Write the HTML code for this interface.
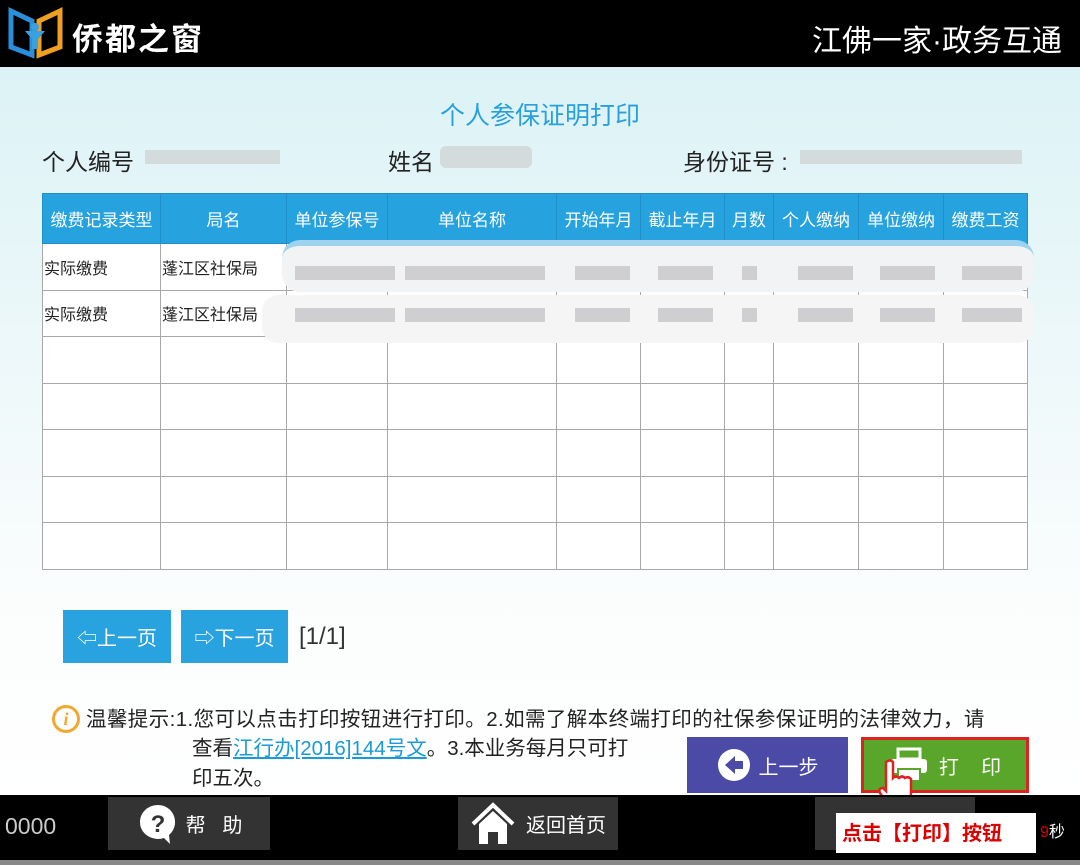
<!DOCTYPE html><html><head><meta charset="utf-8"><style>
*{margin:0;padding:0;box-sizing:border-box}
body{width:1080px;height:865px;position:relative;overflow:hidden;font-family:"Liberation Sans","Noto Sans CJK SC",sans-serif;background:linear-gradient(#d8f1f5 0,#eaf7f9 300px,#fbfdfd 600px,#fff 800px)}
.a{position:absolute}
table{position:absolute;left:42px;top:193px;border-collapse:collapse;background:#fff}
td,th{border:1px solid #a8a8a8;height:46.5px;font-size:16px;font-weight:normal;text-align:left;padding-left:1px;color:#222}
th{background:#26a2df;color:#fff;height:50px;border:1px solid #1e8fc8;text-align:center;padding:0;font-size:17px}
.g{position:absolute;height:14px;background:#cfcfd1}
.btn{position:absolute;color:#fff;font-size:20px;display:flex;align-items:center;justify-content:center}
</style></head><body>
<div class="a" style="left:0;top:0;width:1080px;height:67px;background:#000"></div>
<svg class="a" style="left:8px;top:7px" width="55" height="52"><path d="M3 4 L24 14 L24 48 L3 40 Z" fill="none" stroke="#2a8fd8" stroke-width="5"/><path d="M52 4 L31 14 L31 48 L52 40 Z" fill="none" stroke="#f0a020" stroke-width="5"/><circle cx="27" cy="20" r="4" fill="#3aa0e0"/><path d="M17 24 L37 24 L30 32 L30 42 L24 42 L24 32Z" fill="#3aa0e0"/></svg>
<div class="a" style="left:72px;top:14px;color:#fff;font-size:31px;letter-spacing:2px;font-weight:bold">侨都之窗</div>
<div class="a" style="left:812px;top:16px;color:#fff;font-size:30px">江佛一家·政务互通</div>
<div class="a" style="left:0;top:96px;width:1080px;text-align:center;color:#29a0dc;font-size:25px">个人参保证明打印</div>
<div class="a" style="left:42px;top:143px;font-size:23px;color:#222">个人编号</div>
<div class="g" style="left:145px;top:150px;width:135px;background:#d4dbdd"></div>
<div class="a" style="left:388px;top:143px;font-size:23px;color:#222">姓名</div>
<div class="g" style="left:440px;top:146px;width:92px;height:22px;background:#d4dbdd;border-radius:6px"></div>
<div class="a" style="left:683px;top:143px;font-size:23px;color:#222">身份证号 :</div>
<div class="g" style="left:800px;top:150px;width:222px;background:#d4dbdd"></div>
<table><tr><th style="width:118px">缴费记录类型</th><th style="width:126px">局名</th><th style="width:101px">单位参保号</th><th style="width:169px">单位名称</th><th style="width:84px">开始年月</th><th style="width:84px">截止年月</th><th style="width:49px">月数</th><th style="width:85px">个人缴纳</th><th style="width:85px">单位缴纳</th><th style="width:84px">缴费工资</th></tr>
<tr><td>实际缴费</td><td>蓬江区社保局</td><td></td><td></td><td></td><td></td><td></td><td></td><td></td><td></td></tr>
<tr><td>实际缴费</td><td>蓬江区社保局</td><td></td><td></td><td></td><td></td><td></td><td></td><td></td><td></td></tr>
<tr><td></td><td></td><td></td><td></td><td></td><td></td><td></td><td></td><td></td><td></td></tr>
<tr><td></td><td></td><td></td><td></td><td></td><td></td><td></td><td></td><td></td><td></td></tr>
<tr><td></td><td></td><td></td><td></td><td></td><td></td><td></td><td></td><td></td><td></td></tr>
<tr><td></td><td></td><td></td><td></td><td></td><td></td><td></td><td></td><td></td><td></td></tr>
<tr><td></td><td></td><td></td><td></td><td></td><td></td><td></td><td></td><td></td><td></td></tr></table>
<div class="a" style="left:282px;top:240px;width:752px;height:52px;background:#f2f3f4;border-radius:18px;border-top:6px solid #9fd2ee"></div>
<div class="a" style="left:262px;top:295px;width:772px;height:48px;background:#f5f5f6;border-radius:16px"></div>
<div class="g" style="left:295px;top:266px;width:100px"></div><div class="g" style="left:405px;top:266px;width:140px"></div><div class="g" style="left:575px;top:266px;width:55px"></div><div class="g" style="left:658px;top:266px;width:55px"></div><div class="g" style="left:742px;top:266px;width:15px"></div><div class="g" style="left:798px;top:266px;width:55px"></div><div class="g" style="left:880px;top:266px;width:55px"></div><div class="g" style="left:962px;top:266px;width:60px"></div>
<div class="g" style="left:295px;top:308px;width:100px"></div><div class="g" style="left:405px;top:308px;width:140px"></div><div class="g" style="left:575px;top:308px;width:55px"></div><div class="g" style="left:658px;top:308px;width:55px"></div><div class="g" style="left:742px;top:308px;width:15px"></div><div class="g" style="left:798px;top:308px;width:55px"></div><div class="g" style="left:880px;top:308px;width:55px"></div><div class="g" style="left:962px;top:308px;width:60px"></div>
<div class="btn" style="left:63px;top:610px;width:108px;height:53px;background:#28a3df">⇦上一页</div>
<div class="btn" style="left:181px;top:610px;width:107px;height:53px;background:#28a3df">⇨下一页</div>
<div class="a" style="left:299px;top:623px;font-size:24px;color:#333">[1/1]</div>
<div class="a" style="left:52px;top:705px;width:28px;height:28px;border:3px solid #f0a830;border-radius:50%;color:#f0a830;font-style:italic;font-weight:bold;text-align:center;font-size:18px;line-height:22px;font-family:'Liberation Serif',serif">i</div>
<div class="a" style="left:86px;top:705px;font-size:20.5px;color:#222;line-height:29px;width:960px;white-space:nowrap;letter-spacing:0.4px">温馨提示:1.您可以点击打印按钮进行打印。2.如需了解本终端打印的社保参保证明的法律效力，请</div>
<div class="a" style="left:192px;top:734px;font-size:20.5px;color:#222;line-height:30px;width:500px">查看<span style="color:#1a9ad8;text-decoration:underline">江行办[2016]144号文</span>。3.本业务每月只可打<br>印五次。</div>
<div class="btn" style="left:687px;top:737px;width:161px;height:56px;background:#4b4aa6"><svg width="34" height="34" style="margin-right:8px"><circle cx="17" cy="17" r="16" fill="#fff"/><path d="M8 17 L18 8 L18 13 L26 13 L26 21 L18 21 L18 26Z" fill="#4b4aa6"/></svg>上一步</div>
<div class="btn" style="left:861px;top:737px;width:168px;height:56px;background:#5aa62a;border:3px solid #d22"><svg width="40" height="36" style="margin-right:10px"><rect x="9" y="2" width="22" height="10" fill="none" stroke="#fff" stroke-width="3"/><rect x="2" y="12" width="36" height="14" rx="3" fill="#fff"/><rect x="9" y="22" width="22" height="12" fill="#fff" stroke="#5aa62a" stroke-width="2"/></svg>打&nbsp;&nbsp;&nbsp;&nbsp;印</div>
<svg class="a" style="left:874px;top:758px" width="40" height="52"><path d="M12 4 q4-3 7 0 v16 q3-3 6 0 q3-3 6 0 q3-2 6 1 v14 q0 10-8 14 h-12 q-6-6-11-14 q-2-5 3-5 l3 3Z" fill="#fff" stroke="#d22" stroke-width="2.5"/></svg>
<div class="a" style="left:0;top:795px;width:1080px;height:65px;background:#000"></div>
<div class="a" style="left:0;top:860px;width:1080px;height:5px;background:#888"></div>
<div class="a" style="left:5px;top:813px;font-size:23px;color:#ccc">0000</div>
<div class="btn" style="left:108px;top:797px;width:162px;height:53px;background:#333"><svg width="44" height="44" style="margin-right:6px"><path d="M22 3 a18 17 0 1 0 6 33 l6 6 l-1 -9 a17 17 0 0 0 -11 -30Z" fill="#fff"/><text x="22" y="30" font-size="24" font-weight="bold" text-anchor="middle" fill="#333" font-family="Liberation Sans">?</text></svg>帮&nbsp;&nbsp;&nbsp;助</div>
<div class="btn" style="left:458px;top:797px;width:160px;height:53px;background:#333"><svg width="46" height="44" style="margin-right:10px"><path d="M3 22 L23 3 L43 22" fill="none" stroke="#fff" stroke-width="4"/><path d="M9 22 L23 9 L37 22 V42 H28 V30 H18 V42 H9Z" fill="#fff"/></svg>返回首页</div>
<div class="a" style="left:815px;top:797px;width:160px;height:53px;background:#333"></div>
<div class="a" style="left:836px;top:813px;width:200px;height:40px;background:#fff;color:#d00;font-weight:bold;font-size:20px;padding:4px 6px">点击【打印】按钮</div>
<div class="a" style="left:1040px;top:818px;color:#fff;font-size:16px"><span style="color:#d00">9</span>秒</div>
</body></html>
